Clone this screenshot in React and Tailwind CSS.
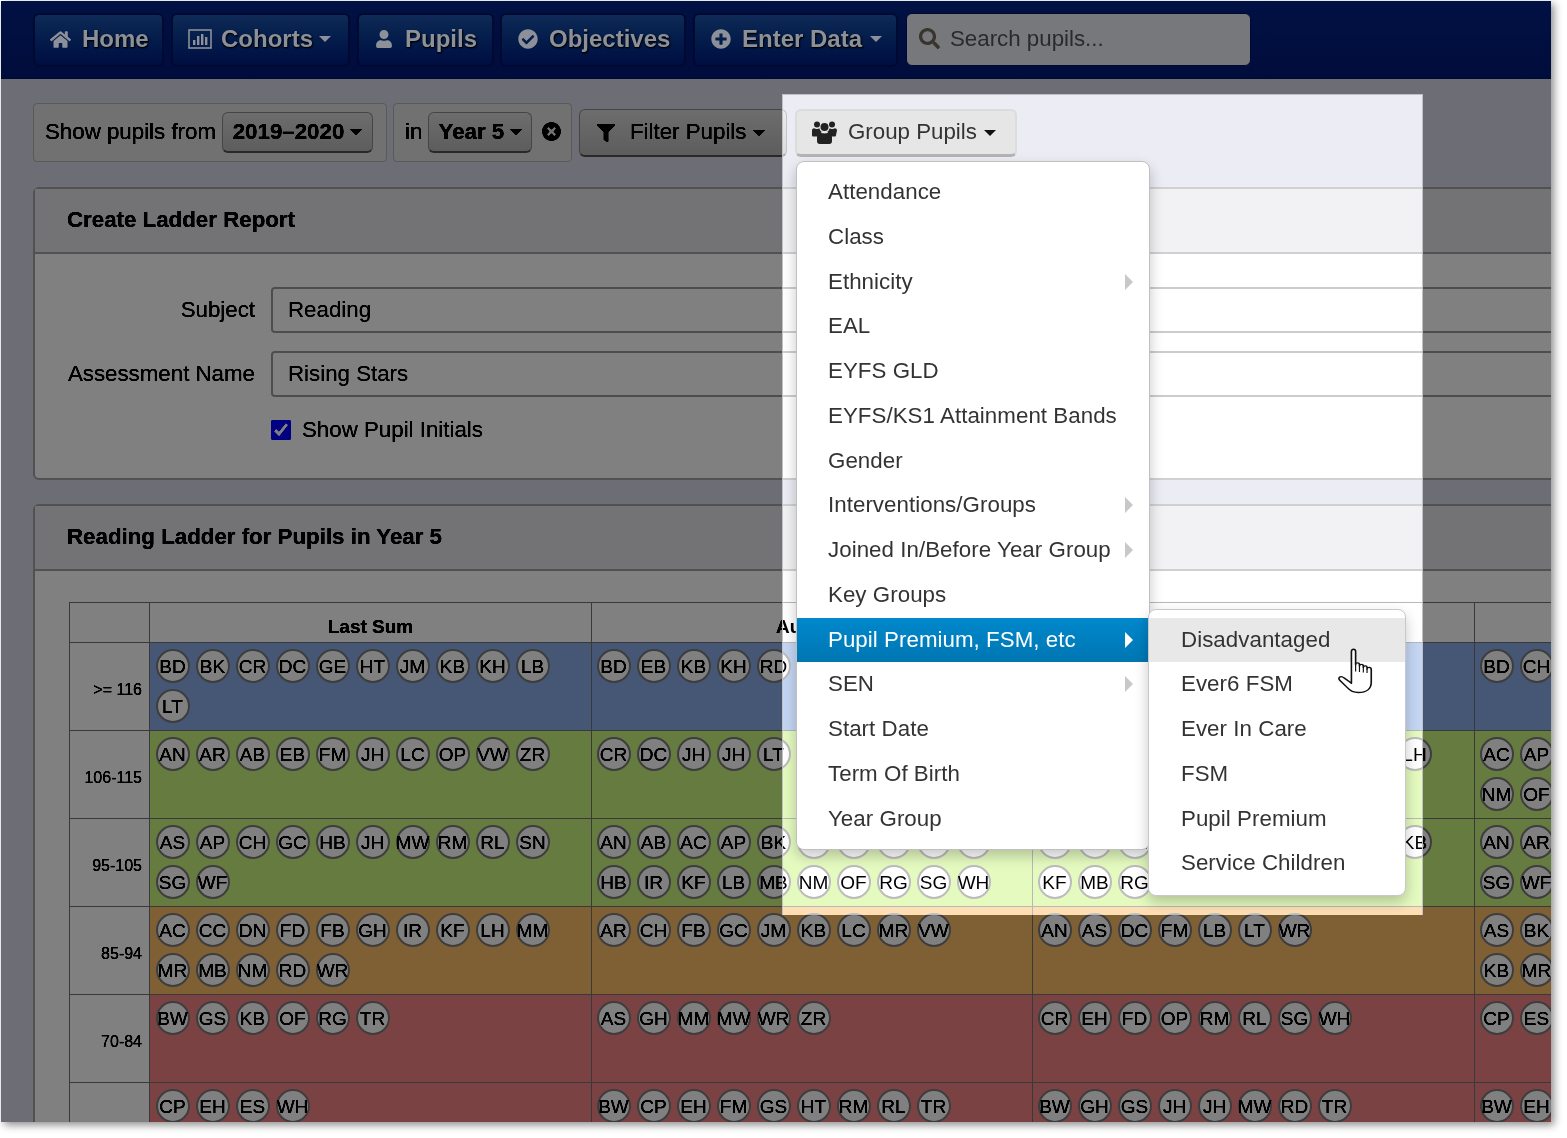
import React from "react";
import { FaHome, FaUser, FaCheckCircle, FaPlusCircle, FaSearch, FaTimesCircle, FaFilter } from "react-icons/fa";

const f = "[font-family:'Liberation_Sans',Arial,sans-serif]";

function Caret() {
  return <span className="inline-block w-0 h-0 border-x-[6px] border-t-[6px] border-x-transparent border-t-current" />;
}

function Bars() {
  return (
    <svg width="24" height="20" viewBox="0 0 24 20" fill="none">
      <rect x="1" y="1" width="22" height="18" stroke="currentColor" strokeWidth="1.6" />
      <rect x="5" y="11" width="2.4" height="5" fill="currentColor" />
      <rect x="9" y="7" width="2.4" height="9" fill="currentColor" />
      <rect x="13" y="5" width="2.4" height="11" fill="currentColor" />
      <rect x="17" y="8" width="2.4" height="8" fill="currentColor" />
    </svg>
  );
}

function UsersIcon() {
  return (
    <svg width="25" height="23" viewBox="0 0 25 23" fill="#222" className="mr-[11px] shrink-0">
      <circle cx="5" cy="3.500" r="3" />
      <circle cx="20" cy="3.500" r="3" />
      <circle cx="12.500" cy="6" r="4" />
      <path d="M0 9.500c0-1.500 1-2.300 2.200-2.300 1 1 4.300 1 5.200 0 .3 1.500 1.200 3 2.400 3.800-1.800 1-2.800 2.500-3.200 4.500H1.300C.5 15.500 0 15 0 14z" />
      <path d="M25 9.500c0-1.500-1-2.300-2.200-2.300-1 1-4.300 1-5.200 0-.3 1.500-1.200 3-2.400 3.800 1.800 1 2.800 2.500 3.200 4.500h4.300c.8 0 1.300-.5 1.300-1.500z" />
      <path d="M8.200 11.200c1.800 1.600 6.800 1.600 8.600 0 2.200.4 3.200 2.300 3.200 5.300v3.500c0 1.800-1 3-2.800 3H7.800C6 23 5 21.800 5 20v-3.500c0-3 1-4.900 3.200-5.300z" />
    </svg>
  );
}

function NavButton({ w, pl, gap, icon, label, caret }) {
  return (
    <div className={`${w} ${pl} ${gap} h-[54px] shrink-0 flex items-center rounded-md border-2 border-[#000a30] bg-gradient-to-b from-[#0f2a56] to-[#000d40] text-[#8c9098] text-[24px] font-bold pb-[2px] [text-shadow:1px_1px_2px_#000,0_1px_1px_#000]`}>
      {icon}
      <span>{label}</span>
      {caret && <span className="-ml-[3px] flex"><Caret /></span>}
    </div>
  );
}

function Nav() {
  return (
    <div className="h-[78px] flex items-start pt-[12px] pl-[32px] bg-gradient-to-b from-[#011143] to-[#000c3c] border-b border-[#000a30]">
      <NavButton w="w-[131px]" pl="pl-[15px]" gap="gap-[11px]" icon={<FaHome size={21} />} label="Home" />
      <div className="w-[7px] shrink-0" />
      <NavButton w="w-[179px]" pl="pl-[15px]" gap="gap-[9px]" icon={<Bars />} label="Cohorts" caret />
      <div className="w-[7px] shrink-0" />
      <NavButton w="w-[137px]" pl="pl-[16px]" gap="gap-[12px]" icon={<FaUser size={18} />} label="Pupils" />
      <div className="w-[6px] shrink-0" />
      <NavButton w="w-[186px]" pl="pl-[16px]" gap="gap-[11px]" icon={<FaCheckCircle size={20} />} label="Objectives" />
      <div className="w-[7px] shrink-0" />
      <NavButton w="w-[205px]" pl="pl-[16px]" gap="gap-[11px]" icon={<FaPlusCircle size={20} />} label="Enter Data" caret />
      <div className="w-[8px] shrink-0" />
      <div className="w-[345px] h-[53px] shrink-0 flex items-center pl-[12px] gap-[10px] rounded-md border border-[#000a30] bg-[#77787c] text-[#2a2a2a] text-[22.3px]">
        <FaSearch size={21} className="text-[#38342e] -mt-[3px]" />
        <span>Search pupils...</span>
      </div>
    </div>
  );
}

function SelectBtn({ label, w }) {
  return (
    <div className={`${w} h-[41px] shrink-0 flex items-center justify-center gap-[6px] rounded-md border border-[#c4c4c4] border-b-2 border-b-[#a8a8a8] bg-gradient-to-b from-[#ececec] to-[#dcdcdc] font-bold text-[#111]`}>
      <span>{label}</span>
      <Caret />
    </div>
  );
}

function Well({ w, children }) {
  return (
    <div className={`${w} h-[59px] shrink-0 flex items-center rounded border border-[#d8d8d8] bg-[#f0f0f0] px-[11px]`}>
      {children}
    </div>
  );
}

const groupItems = [
  ["Attendance"], ["Class"], ["Ethnicity", true], ["EAL"], ["EYFS GLD"], ["EYFS/KS1 Attainment Bands"], ["Gender"],
  ["Interventions/Groups", true], ["Joined In/Before Year Group", true], ["Key Groups"],
  ["Pupil Premium, FSM, etc", true, true], ["SEN", true], ["Start Date"], ["Term Of Birth"], ["Year Group"],
];
const subItems = ["Disadvantaged", "Ever6 FSM", "Ever In Care", "FSM", "Pupil Premium", "Service Children"];

function Hand() {
  return (
    <svg className="absolute left-[189px] top-[30px] z-40" width="35" height="47" viewBox="0 0 30 48" preserveAspectRatio="none" fill="#fff" stroke="#111" strokeWidth="1.400" strokeLinejoin="round">
      <path d="M11.500 3.500c0-3 3.600-3 3.600 0v13.500c0-2.400 3.300-2.400 3.300 0v1.500c0-2.400 3.300-2.400 3.300 0v1.500c0-2.400 3.200-2.400 3.200 0v1.500c0-2.400 3.600-2.400 3.600 .5v13c0 6.500-4 10.500-11 10.500-4.500 0-7.300-2-9.500-5L1.500 33c-1.600-2-.2-4.200 2-3.600 1.600.5 4.500 3.500 8 6.600z" />
      <path d="M15.100 17v7M18.400 18.500v6M21.700 20v5M24.900 21.500v4" fill="none" strokeWidth="1" />
    </svg>
  );
}

function SubMenu() {
  return (
    <div className="absolute left-[351px] top-[-9px] w-[258px] h-[287px] z-30 pt-[8px] rounded-lg bg-white border border-[#c8c8c8] shadow-[0_6px_14px_rgba(0,0,0,0.22)] text-[#333]">
      {subItems.map((s, i) => (
        <div key={s} className={`h-[44.75px] flex items-center pl-[32px] ${i === 0 ? "bg-[#e8e8e8] relative" : ""}`}>
          {s}
          {i === 0 && <Hand />}
        </div>
      ))}
    </div>
  );
}

function GroupMenu() {
  return (
    <div className="absolute left-[1px] top-[52px] w-[354px] h-[689px] z-20 pt-[8px] rounded-lg bg-white border border-[#c0c0c0] shadow-[0_6px_14px_rgba(0,0,0,0.22)] text-[#333]">
      {groupItems.map(([t, arrow, active]) => (
        <div key={t} className={`relative h-[44.75px] flex items-center pl-[31px] tracking-[0.05px] ${active ? "bg-gradient-to-b from-[#0088cc] to-[#0076b2] text-white" : ""}`}>
          {t}
          {arrow && <span className={`absolute right-[16px] top-[14px] w-0 h-0 border-y-[8px] border-l-[8px] border-y-transparent ${active ? "border-l-white" : "border-l-[#c8c8c8]"}`} />}
          {active && <SubMenu />}
        </div>
      ))}
    </div>
  );
}

function Toolbar() {
  return (
    <div className="flex items-start">
      <Well w="w-[354px]">
        <span className="mr-[6px]">Show pupils from</span>
        <SelectBtn w="w-[151px]" label="2019–2020" />
      </Well>
      <div className="w-[6px] shrink-0" />
      <Well w="w-[179px]">
        <span className="mr-[6px]">in</span>
        <SelectBtn w="w-[104px]" label="Year 5" />
        <FaTimesCircle size={19} className="ml-[10px] -mt-[2px] shrink-0 text-[#111]" />
      </Well>
      <div className="w-[7px] shrink-0" />
      <div className="mt-[6px] w-[208px] h-[48px] shrink-0 flex items-center pl-[17px] rounded-md border border-[#c4c4c4] border-b-2 border-b-[#a8a8a8] bg-gradient-to-b from-[#ececec] to-[#dcdcdc] text-[#222]">
        <FaFilter size={18} className="mr-[15px] text-[#111]" />
        <span>Filter Pupils</span>
        <span className="ml-[7px] flex"><Caret /></span>
      </div>
      <div className="w-[8px] shrink-0" />
      <div className="relative z-20 mt-[6px] shrink-0">
        <div className="w-[222px] h-[48px] flex items-center pl-[15px] rounded-md border-2 border-[#dcdcdc] border-b-[3px] border-b-[#b4b4b4] bg-[#e6e6e6] text-[#333]">
          <UsersIcon />
          <span>Group Pupils</span>
          <span className="ml-[7px] flex text-[#111]"><Caret /></span>
        </div>
        <GroupMenu />
      </div>
    </div>
  );
}

function Panel({ title, body, className }) {
  return (
    <div className={`${className} w-[1700px] rounded-md border-2 border-[#d0d0d0] bg-white`}>
      <div className="h-[65px] flex items-center pl-[32px] font-bold text-[#111] bg-[#f2f2f4] border-b-2 border-[#d0d0d0]">{title}</div>
      {body}
    </div>
  );
}

function FormRow({ label, value }) {
  return (
    <div className="flex items-center mb-[18px]">
      <div className="w-[220px] text-right text-[#222]">{label}</div>
      <div className="ml-[16px] w-[1400px] h-[46px] flex items-center pl-[15px] rounded border-2 border-[#cccccc] bg-white text-[#444]">{value}</div>
    </div>
  );
}

const F = "XA XB XC XD XE XF XG XH";
const cols = [
  ["Last Sum", ["BD BK CR DC GE HT JM KB KH LB LT", "AN AR AB EB FM JH LC OP VW ZR", "AS AP CH GC HB JH MW RM RL SN SG WF", "AC CC DN FD FB GH IR KF LH MM MR MB NM RD WR", "BW GS KB OF RG TR", "CP EH ES WH"]],
  ["Autumn", ["BD EB KB KH RD", "CR DC JH JH LT", "AN AB AC AP BK CH GE JM RM RL HB IR KF LB MB NM OF RG SG WH", "AR CH FB GC JM KB LC MR VW", "AS GH MM MW WR ZR", "BW CP EH FM GS HT RM RL TR"]],
  ["Spring", ["BD BK", "AB AR EB FB GC GE JM KH OP LH", "AC AP CH DC HB IR JH JM MM KB KF MB RG", "AN AS DC FM LB LT WR", "CR EH FD OP RM RL SG WH", "BW GH GS JH JH MW RD TR"]],
  ["Summer", ["BD CH", `AC AP ${F} NM OF`, `AN AR ${F} SG WF`, `AS BK ${F} KB MR`, "CP ES", "BW EH"]],
];
const rows = [
  [">= 116", "bg-[#c4d6f3]"],
  ["106-115", "bg-[#e4fabf]"],
  ["95-105", "bg-[#e4fabf]"],
  ["85-94", "bg-[#fddfb3]"],
  ["70-84", "bg-[#fac1c2]"],
  ["", "bg-[#fac1c2]"],
];

function Pupil({ name }) {
  return (
    <div className="w-[34px] h-[34px] rounded-full border-2 border-[#bcbcbc] bg-white flex items-center justify-center text-[19px] text-black whitespace-nowrap leading-none">
      <span className="-ml-[1px]">{name}</span>
    </div>
  );
}

function Ladder() {
  const cell = "border border-[#b8b8b8]";
  return (
    <table className="border-collapse table-fixed w-[1846px] bg-white">
      <colgroup>
        <col className="w-[80px]" />
        <col className="w-[442px]" /><col className="w-[441px]" /><col className="w-[442px]" /><col className="w-[441px]" />
      </colgroup>
      <thead>
        <tr className="h-[40px]">
          <th className={cell} />
          {cols.map(([c]) => (
            <th key={c} className={`${cell} text-[19px] font-bold text-black text-center align-bottom pb-[6px]`}>{c}</th>
          ))}
        </tr>
      </thead>
      <tbody>
        {rows.map(([label, bg], r) => (
          <tr key={r} className="h-[88px]">
            <td className={`${cell} text-right pr-[7px] pt-[6px] text-[16px] text-black`}>{label}</td>
            {cols.map(([c, data], ci) => (
              <td key={c} className={`${cell} ${bg} align-top p-0`}>
                <div className={`flex flex-wrap content-start gap-[6px] ${ci === 0 ? "pl-[6px]" : "pl-[5px]"} pr-[10px] pt-[6px] h-[87px] overflow-hidden`}>
                  {data[r].split(" ").map((n, i) => <Pupil key={i} name={n} />)}
                </div>
              </td>
            ))}
          </tr>
        ))}
      </tbody>
    </table>
  );
}

export default function App() {
  return (
    <div className={`${f} w-[1567px] h-[1138px] bg-white overflow-hidden pt-[1px] pl-[1px] text-[22.3px] leading-none`}>
      <div className="w-[1550px] h-[1121px] overflow-hidden shadow-[3px_3px_8px_rgba(0,0,0,0.45)] bg-[#ebecf4]">
        <Nav />
        <div className="relative h-[1043px] overflow-hidden pl-[32px] pt-[24px]">
          <Toolbar />
          <Panel
            className="mt-[25px]"
            title="Create Ladder Report"
            body={
              <div className="h-[224px] pt-[33px]">
                <FormRow label="Subject" value="Reading" />
                <FormRow label="Assessment Name" value="Rising Stars" />
                <div className="flex items-center ml-[236px] mt-[22px]">
                  <input type="checkbox" readOnly checked className="w-[20px] h-[20px] accent-[#2020ff]" />
                  <span className="ml-[11px] text-[#222]">Show Pupil Initials</span>
                </div>
              </div>
            }
          />
          <Panel
            className="mt-[24px]"
            title="Reading Ladder for Pupils in Year 5"
            body={<div className="pt-[31px] pl-[34px]"><Ladder /></div>}
          />
          <div className="absolute inset-0 z-10 backdrop-brightness-50 backdrop-contrast-200 [clip-path:polygon(evenodd,0_0,100%_0,100%_100%,0_100%,0_0,781px_15px,781px_836px,1422px_836px,1422px_15px,781px_15px)]" />
          <div className="absolute left-[781px] top-[15px] w-[641px] h-[821px] z-10 border border-[#c0c0c8] border-b-0" />
        </div>
      </div>
    </div>
  );
}
